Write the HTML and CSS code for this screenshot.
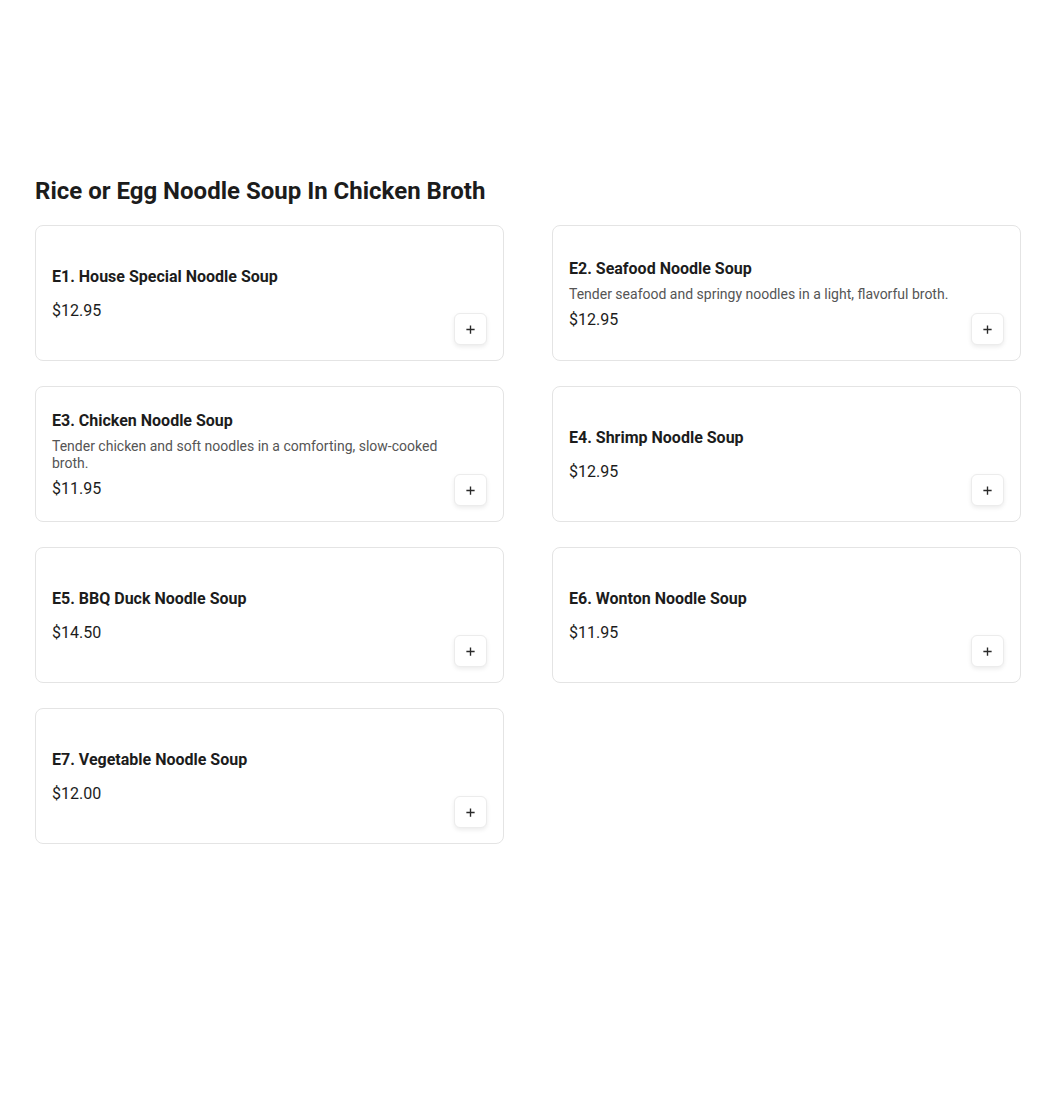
FILE: index.html
```html
<!DOCTYPE html>
<html>
<head>
<meta charset="utf-8">
<link rel="stylesheet" href="styles.css">
</head>
<body>
<section class="menu">
  <h2 class="heading">Rice or Egg Noodle Soup In Chicken Broth</h2>
  <div class="grid">
    <div class="card">
      <div class="info">
        <h3 class="title">E1. House Special Noodle Soup</h3>
        <div class="price">$12.95</div>
      </div>
      <button class="add"><svg viewBox="0 0 12 12" width="12" height="12"><path d="M6 1.5v9M1.5 6h9" stroke="#2a2a2a" stroke-width="1.5" fill="none"/></svg></button>
    </div>
    <div class="card">
      <div class="info">
        <h3 class="title">E2. Seafood Noodle Soup</h3>
        <p class="desc">Tender seafood and springy noodles in a light, flavorful broth.</p>
        <div class="price">$12.95</div>
      </div>
      <button class="add"><svg viewBox="0 0 12 12" width="12" height="12"><path d="M6 1.5v9M1.5 6h9" stroke="#2a2a2a" stroke-width="1.5" fill="none"/></svg></button>
    </div>
    <div class="card">
      <div class="info">
        <h3 class="title">E3. Chicken Noodle Soup</h3>
        <p class="desc">Tender chicken and soft noodles in a comforting, slow-cooked broth.</p>
        <div class="price">$11.95</div>
      </div>
      <button class="add"><svg viewBox="0 0 12 12" width="12" height="12"><path d="M6 1.5v9M1.5 6h9" stroke="#2a2a2a" stroke-width="1.5" fill="none"/></svg></button>
    </div>
    <div class="card">
      <div class="info">
        <h3 class="title">E4. Shrimp Noodle Soup</h3>
        <div class="price">$12.95</div>
      </div>
      <button class="add"><svg viewBox="0 0 12 12" width="12" height="12"><path d="M6 1.5v9M1.5 6h9" stroke="#2a2a2a" stroke-width="1.5" fill="none"/></svg></button>
    </div>
    <div class="card">
      <div class="info">
        <h3 class="title">E5. BBQ Duck Noodle Soup</h3>
        <div class="price">$14.50</div>
      </div>
      <button class="add"><svg viewBox="0 0 12 12" width="12" height="12"><path d="M6 1.5v9M1.5 6h9" stroke="#2a2a2a" stroke-width="1.5" fill="none"/></svg></button>
    </div>
    <div class="card">
      <div class="info">
        <h3 class="title">E6. Wonton Noodle Soup</h3>
        <div class="price">$11.95</div>
      </div>
      <button class="add"><svg viewBox="0 0 12 12" width="12" height="12"><path d="M6 1.5v9M1.5 6h9" stroke="#2a2a2a" stroke-width="1.5" fill="none"/></svg></button>
    </div>
    <div class="card">
      <div class="info">
        <h3 class="title">E7. Vegetable Noodle Soup</h3>
        <div class="price">$12.00</div>
      </div>
      <button class="add"><svg viewBox="0 0 12 12" width="12" height="12"><path d="M6 1.5v9M1.5 6h9" stroke="#2a2a2a" stroke-width="1.5" fill="none"/></svg></button>
    </div>
  </div>
</section>
</body>
</html>
```
FILE: styles.css
```css
* { box-sizing: border-box; }
body {
  margin: 0;
  background: #fff;
  font-family: Roboto, "Liberation Sans", sans-serif;
  color: #1a1a1a;
}
.menu {
  width: 986px;
  margin-left: 35px;
  padding-top: 175px;
}
.heading {
  margin: 0 0 18px;
  font-size: 24px;
  line-height: 32px;
  font-weight: 700;
  color: #1c1c1c;
}
.grid {
  display: grid;
  grid-template-columns: 1fr 1fr;
  column-gap: 48px;
  row-gap: 25px;
}
.card {
  height: 136px;
  border: 1px solid #e4e4e4;
  border-radius: 8px;
  padding: 17px 16px 15px;
  display: flex;
  align-items: center;
  gap: 12px;
}
.info {
  flex: 1;
  min-width: 0;
}
.title {
  margin: 0 0 5px;
  font-size: 16px;
  line-height: 24px;
  font-weight: 700;
  color: #1c1c1c;
}
.desc {
  margin: 0 0 5px;
  font-size: 14px;
  line-height: 17px;
  color: #555;
}
.title + .price { margin-top: 10px; }
.price {
  font-size: 16px;
  line-height: 24px;
  color: #1c1c1c;
}
.add {
  align-self: flex-end;
  flex: none;
  width: 33px;
  height: 32px;
  padding: 0;
  border: 1px solid #ececec;
  border-radius: 6px;
  background: #fff;
  box-shadow: 0 2px 4px rgba(0,0,0,0.08);
  display: flex;
  align-items: center;
  justify-content: center;
  cursor: pointer;
}
.add svg { display: block; width: 11px; height: 11px; }
```
